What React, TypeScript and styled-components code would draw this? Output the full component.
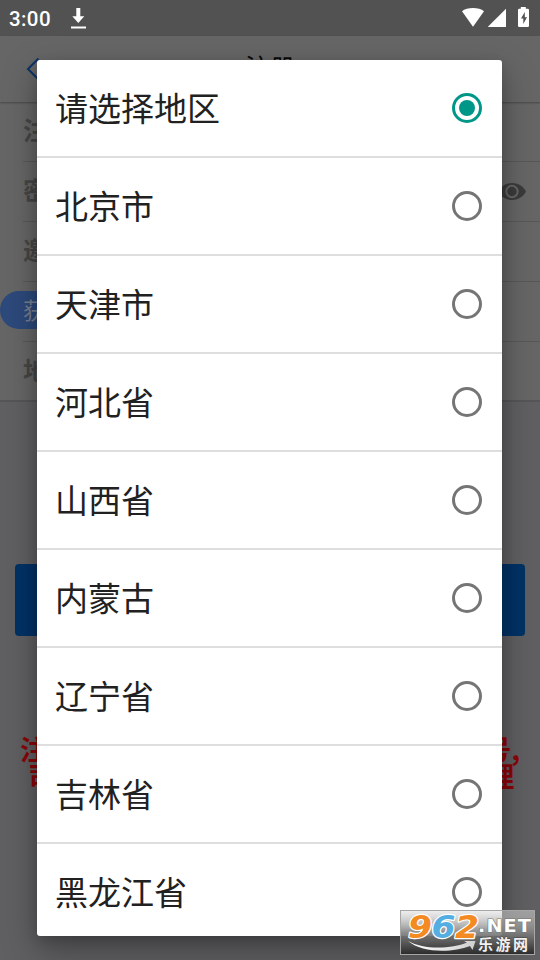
import React, { useState } from "react";
import styled, { createGlobalStyle } from "styled-components";

const Global = createGlobalStyle`
  * { box-sizing: border-box; }
  body { margin: 0; background: #5f5f61; }
  button { font: inherit; border: 0; padding: 0; }
`;

const Screen = styled.div`
  position: relative;
  display: flex;
  flex-direction: column;
  width: 540px;
  height: 960px;
  overflow: hidden;
  background: #606062;
  font-family: Roboto, "Noto Sans CJK SC", sans-serif;
`;

const StatusBar = styled.div`
  display: flex;
  align-items: center;
  height: 36px;
  flex: none;
  padding: 0 9px 0 9px;
  background: #525252;
  color: #fff;
  font-size: 20.5px;
  font-weight: 500;
  letter-spacing: 0.4px;
`;

const Clock = styled.span`
  width: 61px;
  line-height: 36px;
  padding-top: 2px;
`;

const StatusIcons = styled.div`
  display: flex;
  margin-left: auto;
`;

const Header = styled.header`
  display: flex;
  align-items: center;
  position: relative;
  flex: none;
  height: 66px;
  padding-left: 26px;
  background: #666;
  box-shadow: 0 1px 2px rgba(0, 0, 0, 0.3);
`;

const Title = styled.h1`
  flex: 1;
  margin: 0 40px 0 0;
  text-align: center;
  color: #080808;
  font-size: 25px;
  font-weight: 400;
  line-height: 66px;
`;

const Form = styled.div`
  flex: none;
  height: 300px;
  background: #666;
  border-bottom: 2px solid #565658;
`;

const Field = styled.div<{ $last?: boolean }>`
  display: flex;
  align-items: center;
  height: 60px;
  margin-left: 23px;
  padding-right: 14px;
  border-bottom: ${(p) => (p.$last ? "0" : "1px solid #585858")};
  color: #464646;
  font-size: 25px;
  font-weight: 700;
  line-height: 34px;

  svg { margin-left: auto; }
`;

const CodeButton = styled.button`
  height: 38px;
  width: 150px;
  margin: -3px 0 0 -23px;
  padding: 4px 0 0 23px;
  border-radius: 19px;
  background: #2d4a7c;
  color: #777f8e;
  text-align: left;
  font-size: 23px;
  font-weight: 400;
`;

const Submit = styled.button`
  flex: none;
  height: 72px;
  margin: 162px 15px 0;
  border-radius: 4px;
  background: #003266;
`;

const Notice = styled.p`
  flex: none;
  margin: 99px 0 0;
  text-align: center;
  color: #8a0609;
  font-family: "Noto Sans CJK SC", sans-serif;
  font-size: 27.3px;
  font-weight: 700;
  line-height: 27px;
  white-space: nowrap;
`;

const NoticeLine = styled.span<{ $tight?: boolean }>`
  display: block;
  letter-spacing: ${(p) => (p.$tight ? "-0.3px" : "0")};
  padding-left: ${(p) => (p.$tight ? "2px" : "0")};
`;

const Backdrop = styled.div`
  position: absolute;
  inset: 0;
  padding: 60px 38px 24px 37px;
`;

const Dialog = styled.div`
  height: 876px;
  overflow: hidden;
  border-radius: 3px;
  background: #fff;
  box-shadow: 0 14px 34px rgba(0, 0, 0, 0.34), 0 4px 12px rgba(0, 0, 0, 0.12);
`;

const Option = styled.div`
  display: flex;
  align-items: center;
  justify-content: space-between;
  height: 98px;
  padding: 0 20px 2px 18px;
  box-shadow: inset 0 -2px #dedede;
  color: #212121;
  font-family: "Noto Sans CJK SC", sans-serif;
  font-size: 33px;
  line-height: 46px;
  cursor: pointer;
`;

const Label = styled.span`
  padding-bottom: 2px;
`;

const Radio = styled.i<{ $on: boolean }>`
  display: flex;
  align-items: center;
  justify-content: center;
  width: 30px;
  height: 30px;
  border: 3px solid ${(p) => (p.$on ? "#009688" : "#757575")};
  border-radius: 50%;

  &::after {
    content: "";
    width: 16px;
    height: 16px;
    border-radius: 50%;
    background: ${(p) => (p.$on ? "#009688" : "transparent")};
  }
`;

const Watermark = styled.div`
  position: absolute;
  left: 400px;
  top: 910px;
  width: 135px;
  height: 45px;

  svg { overflow: visible; }
`;

const regions = ["请选择地区", "北京市", "天津市", "河北省", "山西省", "内蒙古", "辽宁省", "吉林省", "黑龙江省"];

const DownloadIcon = () => (
  <svg width="17" height="22" viewBox="0 0 17 22" fill="#fff">
    <path d="M6.3 1h4v8.3h4L8.3 16l-6-6.7h4zM1 19.5h15v2H1z" />
  </svg>
);

const DeviceIcons = () => (
  <svg width="70" height="22" viewBox="462 7 70 22" fill="#fff">
    <path d="M463 11.2c5-4.3 17-4.3 22 0L474 26.8z" />
    <path d="M507 8.7V27h-18.3z" />
    <path fillRule="evenodd" d="M521.8 7h5v1.7h2q1.2 0 1.2 1.2v15.8q0 1.3-1.2 1.3h-8.6q-1.2 0-1.2-1.3V9.9q0-1.2 1.2-1.2h1.6zM525.8 12l-3.8 6.6h2.3V24l3.7-6.7h-2.2z" />
  </svg>
);

const BackIcon = () => (
  <svg width="14" height="24" viewBox="0 0 14 24" fill="none" stroke="#0b3468" strokeWidth="2">
    <path d="M12.5 1.5 2 12l10.5 10.5" />
  </svg>
);

const EyeIcon = () => (
  <svg width="28" height="19" viewBox="0 0 28 19">
    <path d="M0 9.5C6-1.8 22-1.8 28 9.5 22 20.8 6 20.8 0 9.5" fill="#3b3b3b" />
    <circle cx="14" cy="9.5" r="5.7" fill="#3b3b3b" stroke="#666" strokeWidth="2" />
  </svg>
);

const SiteLogo = () => (
  <svg width="135" height="45" viewBox="0 0 135 45">
    <defs>
      <linearGradient id="plate" x2="0" y2="1">
        <stop offset="0" stopColor="#dedede" stopOpacity=".5" />
        <stop offset=".5" stopColor="#808080" stopOpacity=".9" />
        <stop offset="1" stopColor="#2a2a2a" />
      </linearGradient>
      <linearGradient id="swoosh" x2="1" y2="0">
        <stop offset="0" stopColor="#fff" />
        <stop offset="1" stopColor="#d0d0d0" />
      </linearGradient>
    </defs>
    <rect x=".5" y=".5" width="134" height="44" fill="url(#plate)" stroke="#a6a6a6" />
    <path d="M8 31c16 9 43 8 59 1.500l-3-1.500 11.500 0-3 9-2.500-4C52 43 22 43 8 31z" fill="url(#swoosh)" />
    <g fontFamily="'DejaVu Sans', sans-serif" fontWeight="700" fontStyle="italic" fontSize="32" stroke="#fff" strokeWidth="2.400" paintOrder="stroke" strokeLinejoin="round">
      <text x="8" y="28" textLength="24" lengthAdjust="spacingAndGlyphs" fill="#f38b22">9</text>
      <text x="31.500" y="28" textLength="24" lengthAdjust="spacingAndGlyphs" fill="#55aee2">6</text>
      <text x="55" y="28" textLength="24" lengthAdjust="spacingAndGlyphs" fill="#f38b22">2</text>
    </g>
    <text x="78" y="22" textLength="54" lengthAdjust="spacingAndGlyphs" letterSpacing="1" fontFamily="'DejaVu Sans', sans-serif" fontWeight="700" fontSize="18" fill="#fff" stroke="#777" strokeWidth="1.200" paintOrder="stroke">.NET</text>
    <text x="78" y="40" textLength="50" fontFamily="'Noto Sans CJK SC', sans-serif" fontWeight="700" fontSize="15" fill="#f1f1f1" stroke="#444" strokeWidth="1" paintOrder="stroke">乐游网</text>
  </svg>
);

export default function App() {
  const [selected, setSelected] = useState(0);
  return (
    <Screen>
      <Global />
      <StatusBar>
        <Clock>3:00</Clock>
        <DownloadIcon />
        <StatusIcons><DeviceIcons /></StatusIcons>
      </StatusBar>
      <Header><BackIcon /><Title>注册</Title></Header>
      <Form>
        <Field>注册</Field>
        <Field>密码<EyeIcon /></Field>
        <Field>邀请</Field>
        <Field><CodeButton>获取</CodeButton></Field>
        <Field $last>地区</Field>
      </Form>
      <Submit aria-label="注册" />
      <Notice>
        <NoticeLine>注册即表示同意本平台协议请勿重复账号,</NoticeLine>
        <NoticeLine $tight>司法机关将对违规行为依法进行追究处理</NoticeLine>
      </Notice>
      <Backdrop>
        <Dialog role="radiogroup">
          {regions.map((name, i) => (
            <Option key={name} role="radio" aria-checked={selected === i} onClick={() => setSelected(i)}>
              <Label>{name}</Label>
              <Radio $on={selected === i} />
            </Option>
          ))}
        </Dialog>
      </Backdrop>
      <Watermark><SiteLogo /></Watermark>
    </Screen>
  );
}
